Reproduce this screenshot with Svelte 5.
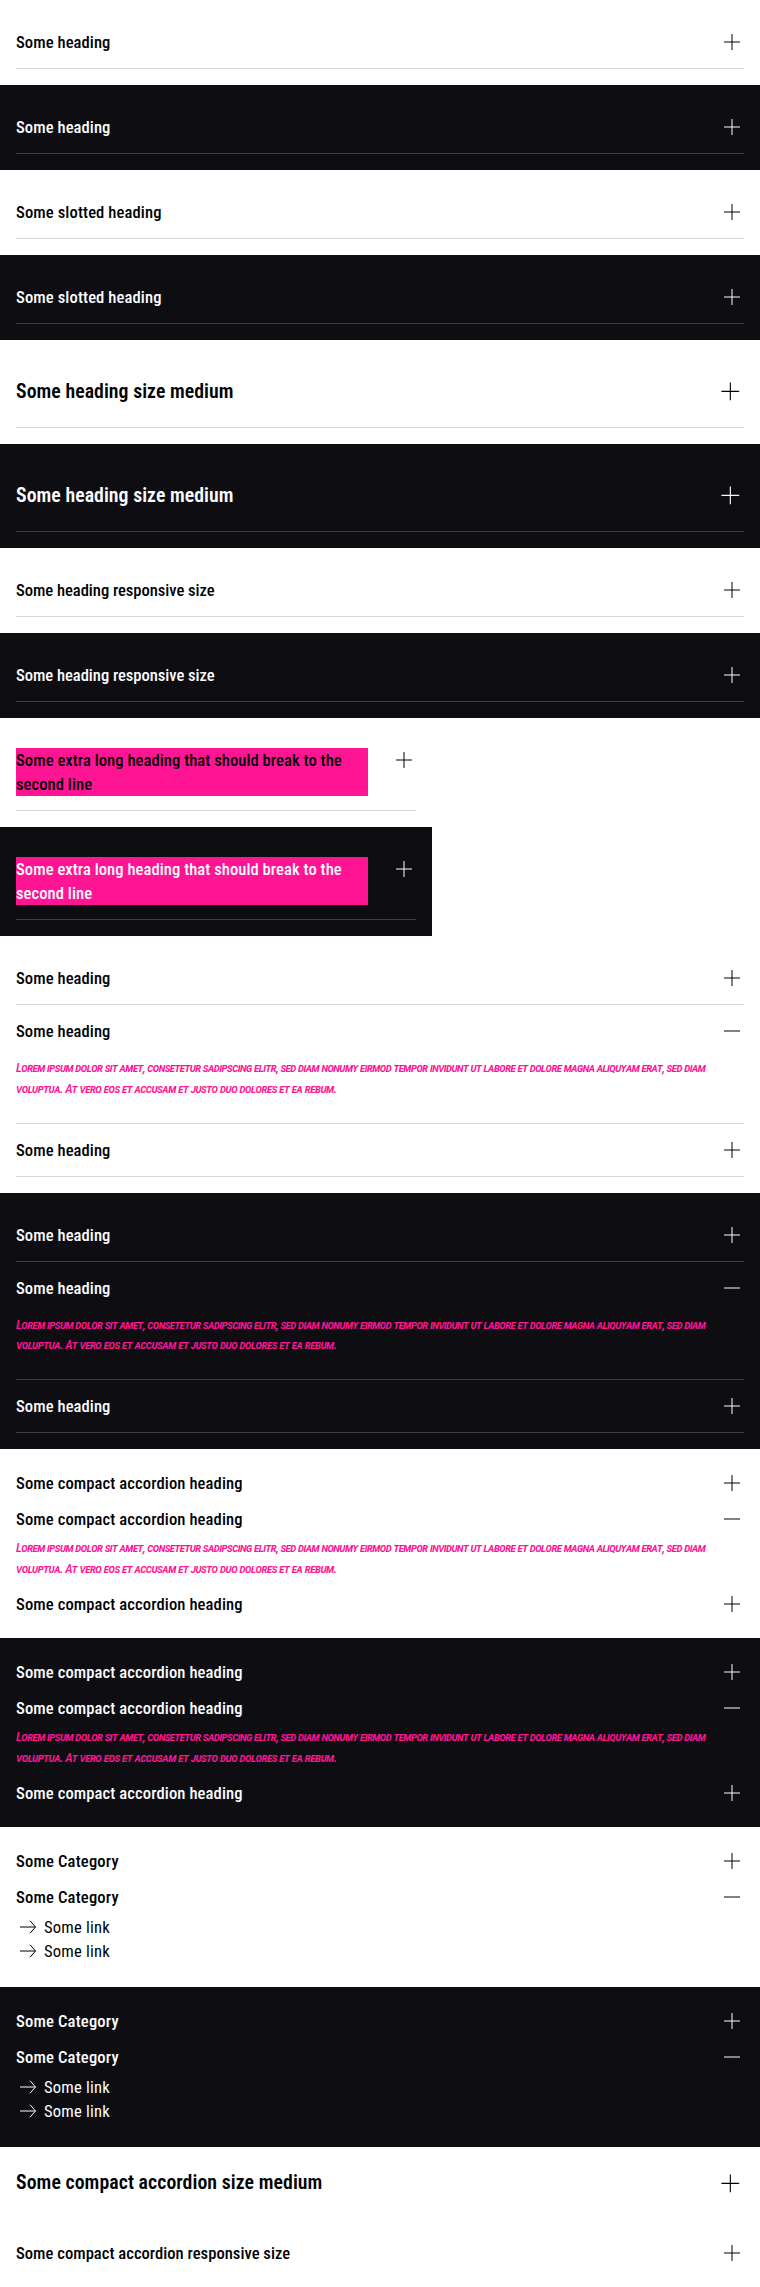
<script>
  const heading = { text: 'Some heading', track: 0.07 };
  const slotted = { text: 'Some slotted heading', track: 0.11 };
  const medium = { text: 'Some heading size medium', track: 0.05 };
  const responsive = { text: 'Some heading responsive size', track: -0.04 };
  const long = { text: 'Some extra long heading that should break to the second line', track: 0.05 };
  const compact = { text: 'Some compact accordion heading', track: 0.1 };
  const category = { text: 'Some Category', track: 0.17 };

  const both = (section) => [section, { ...section, dark: true }];
  const group = (item, body) => [item, { ...item, open: true, body }, item];

  const sections = [
    ...both({ items: [heading] }),
    ...both({ items: [slotted] }),
    ...both({ size: 'medium', items: [medium] }),
    ...both({ items: [responsive] }),
    ...both({ narrow: true, items: [long] }),
    ...both({ items: group(heading, 'text') }),
    ...both({ compact: true, items: group(compact, 'text') }),
    ...both({ compact: true, items: [category, { ...category, open: true, body: 'links' }] }),
    { compact: true, size: 'medium', items: [{ text: 'Some compact accordion size medium', track: 0.07 }] },
    { compact: true, items: [{ text: 'Some compact accordion responsive size', track: 0.02 }] }
  ];
</script>

<main>
  {#each sections as section}
    <section
      class:dark={section.dark}
      class:compact={section.compact}
      class:medium={section.size === 'medium'}
      class:narrow={section.narrow}
    >
      {#each section.items as item}
        <div class="accordion">
          <button type="button" aria-expanded={item.open ? 'true' : 'false'}>
            <span class="title" style:letter-spacing="{item.track}px">{item.text}</span>
            <svg class="icon" viewBox="0 0 24 24" aria-hidden="true">
              {#if item.open}
                <path d="M4 11.5h16v1H4z" />
              {:else}
                <path d="M4 11.5h7.5V4h1v7.5H20v1h-7.5V20h-1v-7.5H4z" />
              {/if}
            </svg>
          </button>
          {#if item.body === 'text'}
            <p class="text">
              <span class="first">Lorem ipsum dolor sit amet, consetetur sadipscing elitr, sed diam nonumy eirmod tempor invidunt ut labore et dolore magna aliquyam erat, sed diam</span><br />
              <span class="second">voluptua. At vero eos et accusam et justo duo dolores et ea rebum.</span>
            </p>
          {:else if item.body === 'links'}
            <div class="links">
              {#each [1, 2] as n (n)}
                <a href="#link-{n}">
                  <svg viewBox="0 0 24 24" aria-hidden="true">
                    <path d="M4 12h15.5" />
                    <path d="M14 5.7 19.5 12 14 18.3" />
                  </svg>
                  <span>Some link</span>
                </a>
              {/each}
            </div>
          {/if}
        </div>
      {/each}
    </section>
  {/each}
</main>

<style>
  :global(body) {
    margin: 0;
    background: #fff;
  }

  main {
    font-family: Roboto, 'Liberation Sans', sans-serif;
    font-stretch: 75%;
  }

  section {
    --fg: #010205;
    --line: #d8d8db;
    box-sizing: border-box;
    padding: 16px;
    color: var(--fg);
    background: #fff;
  }

  .dark {
    --fg: #fbfcff;
    --line: #404044;
    background: #0e0e12;
  }

  .narrow {
    width: 432px;
  }

  .accordion {
    border-bottom: 1px solid var(--line);
  }

  .compact .accordion {
    border-bottom: 0;
  }

  button {
    display: flex;
    align-items: flex-start;
    justify-content: space-between;
    gap: 24px;
    width: 100%;
    margin: 0;
    padding: 14px 0;
    border: 0;
    background: none;
    color: inherit;
    font: inherit;
    font-size: 16.6px;
    font-weight: 500;
    line-height: 24px;
    text-align: left;
  }

  .compact button {
    padding: 6px 0;
  }

  .medium button {
    padding: 21.5px 0;
    font-size: 19.8px;
    font-weight: 600;
    line-height: 28px;
    align-items: center;
  }

  .medium.compact button {
    padding: 6px 0;
  }

  .title {
    box-sizing: border-box;
    padding-top: 1px;
    margin-bottom: -1px;
  }

  .medium .title {
    padding-top: 0;
    margin-bottom: 0;
  }

  .narrow .title {
    height: 48px;
    margin-bottom: 0;
    background: #ff1493;
  }

  .icon {
    flex: none;
    width: 24px;
    height: 24px;
    fill: var(--fg);
  }

  .medium .icon {
    width: 26.67px;
    height: 26.67px;
  }

  .text {
    margin: 0;
    padding: 1px 0 23.5px;
    color: #ff1493;
    font-size: 13px;
    font-style: italic;
    font-variant: small-caps;
    font-weight: 500;
    line-height: 20.5px;
    white-space: nowrap;
  }

  .first {
    letter-spacing: -0.68px;
  }

  .second {
    letter-spacing: -0.6px;
  }

  .compact .text {
    padding-bottom: 7px;
  }

  .links {
    display: flex;
    flex-direction: column;
    padding-bottom: 8px;
  }

  a {
    display: flex;
    gap: 4px;
    color: inherit;
    font-size: 16.6px;
    line-height: 24px;
    letter-spacing: 0.2px;
    text-decoration: none;
  }

  a span {
    padding-top: 1px;
    margin-bottom: -1px;
  }

  a svg {
    width: 24px;
    height: 24px;
    fill: none;
    stroke: var(--fg);
    stroke-width: 1;
  }
</style>
